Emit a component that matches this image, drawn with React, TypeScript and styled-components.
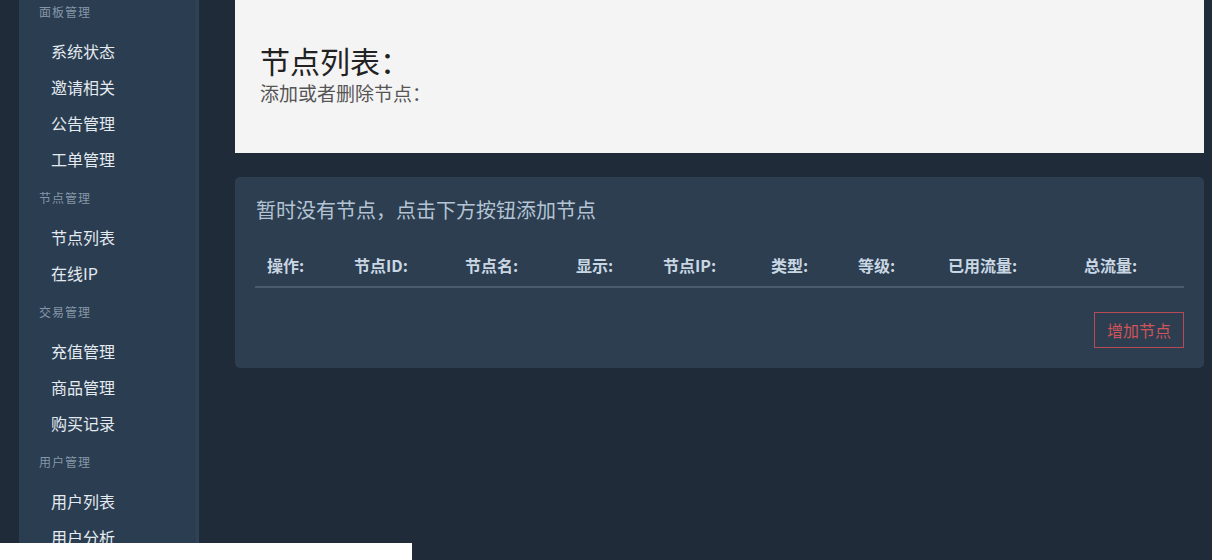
import React from 'react';
import styled, {createGlobalStyle} from 'styled-components';

const GlobalStyle = createGlobalStyle`
  html, body {
    margin: 0;
    padding: 0;
    height: 100%;
    background: #1f2b38;
    font-family: "Noto Sans CJK SC", "Liberation Sans", sans-serif;
    overflow: hidden;
  }
`

interface MenuGroup {
    title: string;
    items: string[];
}

const menu: MenuGroup[] = [
    {title: "面板管理", items: ["系统状态", "邀请相关", "公告管理", "工单管理"]},
    {title: "节点管理", items: ["节点列表", "在线IP"]},
    {title: "交易管理", items: ["充值管理", "商品管理", "购买记录"]},
    {title: "用户管理", items: ["用户列表", "用户分析"]},
];

const columns = [
    {label: "操作:", width: 87},
    {label: "节点ID:", width: 111},
    {label: "节点名:", width: 111},
    {label: "显示:", width: 87},
    {label: "节点IP:", width: 108},
    {label: "类型:", width: 87},
    {label: "等级:", width: 90},
    {label: "已用流量:", width: 136},
    {label: "总流量:", width: 112},
];

const App = () => {
    return (
        <>
            <GlobalStyle/>
            <Page>
                <Sidebar>
                    <MenuList>
                        {menu.map(group => (
                            <React.Fragment key={group.title}>
                                <GroupTitle>{group.title}</GroupTitle>
                                {group.items.map(item => (
                                    <MenuItem key={item}>{item}</MenuItem>
                                ))}
                            </React.Fragment>
                        ))}
                    </MenuList>
                </Sidebar>
                <Main>
                    <Header>
                        <HeaderTitle>节点列表：</HeaderTitle>
                        <HeaderSub>添加或者删除节点：</HeaderSub>
                    </Header>
                    <Card>
                        <CardTitle>暂时没有节点，点击下方按钮添加节点</CardTitle>
                        <TableHead>
                            {columns.map(col => (
                                <HeadCell key={col.label} $width={col.width}>{col.label}</HeadCell>
                            ))}
                        </TableHead>
                        <Actions>
                            <AddButton>增加节点</AddButton>
                        </Actions>
                    </Card>
                </Main>
            </Page>
            <BottomBar/>
        </>
    );
};

export default App;

const Page = styled.div`
  display: flex;
  height: 560px;
  padding-left: 19px;
  box-sizing: border-box;
`

const Sidebar = styled.nav`
  width: 180px;
  flex-shrink: 0;
  height: 100%;
  background: #2b3d50;
  overflow: hidden;
  box-shadow: inset -3px 0 0 #2f4256;
`

const MenuList = styled.div`
  margin-top: -9px;
  display: flex;
  flex-direction: column;
`

const GroupTitle = styled.div`
  height: 42px;
  line-height: 42px;
  padding-left: 20px;
  font-size: 12px;
  letter-spacing: 1px;
  color: #8596a8;
`

const MenuItem = styled.div`
  height: 36px;
  line-height: 36px;
  padding-left: 32px;
  font-size: 16px;
  color: #e4eaf0;
`

const Main = styled.main`
  flex: 1;
  padding: 0 8px 0 36px;
  display: flex;
  flex-direction: column;
  gap: 24px;
`

const Header = styled.div`
  height: 153px;
  box-sizing: border-box;
  background: #f4f4f4;
  padding: 45px 25px 0;
`

const HeaderTitle = styled.div`
  font-size: 30px;
  line-height: 30px;
  color: #222;
`

const HeaderSub = styled.div`
  margin-top: 7px;
  font-size: 19px;
  line-height: 22px;
  color: #555;
`

const Card = styled.div`
  background: #2c3e50;
  border-radius: 5px;
  padding: 20px;
`

const CardTitle = styled.div`
  font-size: 20px;
  line-height: 26px;
  padding-left: 1px;
  color: #b4c4d4;
`

const TableHead = styled.div`
  display: flex;
  margin-top: 22px;
  border-bottom: 2px solid #4b5b6b;
`

const HeadCell = styled.div<{ $width: number }>`
  width: ${p => p.$width}px;
  flex-shrink: 0;
  padding: 8px 0 8px 12px;
  box-sizing: border-box;
  font-size: 16px;
  line-height: 25px;
  font-weight: bold;
  color: #c9d6e3;
`

const Actions = styled.div`
  display: flex;
  justify-content: flex-end;
  margin-top: 24px;
`

const AddButton = styled.button`
  width: 90px;
  height: 36px;
  background: transparent;
  border: 1px solid #b94a55;
  color: #d0545a;
  font-family: inherit;
  font-size: 16px;
  cursor: pointer;
`

const BottomBar = styled.div`
  position: fixed;
  left: 0;
  bottom: 0;
  width: 412px;
  height: 17px;
  background: #fff;
`
